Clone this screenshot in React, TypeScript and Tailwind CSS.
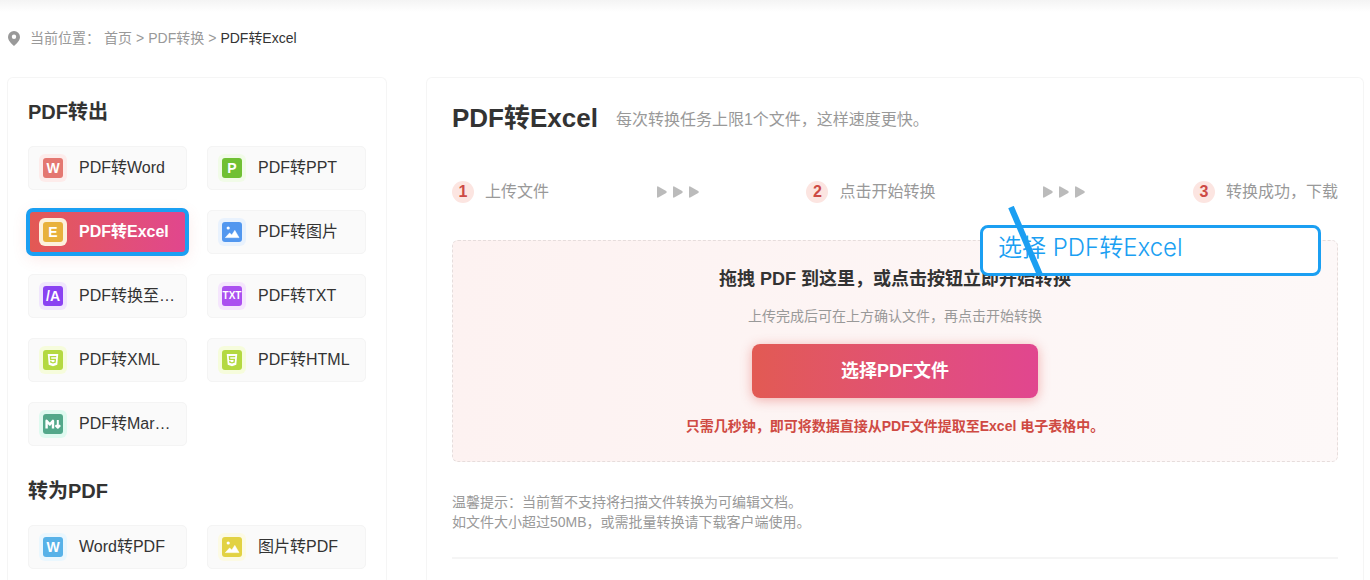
import type { ReactNode } from "react";
import { FaHtml5 } from "react-icons/fa";

interface Tool {
  label: string;
  icon: ReactNode;
  tile: string;
  halo: string;
  active?: boolean;
}

const Letter = ({ children }: { children: string }) => (
  <span className="text-sm leading-5 font-bold">{children}</span>
);

const PictureIcon = () => (
  <svg viewBox="0 0 20 20" className="size-5" fill="currentColor">
    <circle cx="6.2" cy="6" r="1.6" />
    <path d="M3.4 15.6 7.6 11l2.2 2 3-4.6 4.2 7.2z" stroke="currentColor" strokeWidth="0.6" strokeLinejoin="round" />
  </svg>
);

const MarkdownIcon = () => (
  <svg viewBox="0 0 20 20" className="size-5" fill="none" stroke="currentColor" strokeWidth="2.4" strokeLinejoin="round">
    <path d="M3.6 14.4V6.8L6.8 10.6 10 6.8V14.4" />
    <path d="M14.8 6V12M12.4 11.2 14.8 13.8 17.2 11.2" strokeWidth="2" />
  </svg>
);

const exportTools: Tool[] = [
  { label: "PDF转Word", icon: <Letter>W</Letter>, tile: "bg-[#e47771]", halo: "bg-[#fdeceb]" },
  { label: "PDF转PPT", icon: <Letter>P</Letter>, tile: "bg-[#70c034]", halo: "bg-[#f1fbe8]" },
  { label: "PDF转Excel", icon: <Letter>E</Letter>, tile: "bg-[#e8b13c]", halo: "bg-[#fdf1dc]", active: true },
  { label: "PDF转图片", icon: <PictureIcon />, tile: "bg-[#5297ef]", halo: "bg-[#e9f2fd]" },
  { label: "PDF转换至…", icon: <Letter>/A</Letter>, tile: "bg-[#8a42f2]", halo: "bg-[#f0e6fd]" },
  { label: "PDF转TXT", icon: <span className="text-[10px] leading-5 font-bold">TXT</span>, tile: "bg-[#ab50f0]", halo: "bg-[#f5e6fd]" },
  { label: "PDF转XML", icon: <FaHtml5 className="size-3.5" />, tile: "bg-[#b4d941]", halo: "bg-[#f6fcdc]" },
  { label: "PDF转HTML", icon: <FaHtml5 className="size-3.5" />, tile: "bg-[#b4d941]", halo: "bg-[#f6fcdc]" },
  { label: "PDF转Mar…", icon: <MarkdownIcon />, tile: "bg-[#53a88a]", halo: "bg-[#dffaf0]" },
];

const importTools: Tool[] = [
  { label: "Word转PDF", icon: <Letter>W</Letter>, tile: "bg-[#58b2e8]", halo: "bg-[#eaf7fe]" },
  { label: "图片转PDF", icon: <PictureIcon />, tile: "bg-[#e2d243]", halo: "bg-[#fcfae4]" },
];

const ToolLink = ({ label, icon, tile, halo, active }: Tool) => (
  <a
    href="#"
    className={
      active
        ? "flex h-11 items-center gap-3 rounded-[5px] bg-linear-to-r from-[#e35952] to-[#e1468e] px-[11px] font-bold text-white shadow-[0_4px_16px_rgba(227,89,82,0.15)] outline-4 -outline-offset-2 outline-[#1b9ff2]"
        : "flex h-11 items-center gap-3 rounded-[5px] border border-[#f4f4f4] bg-[#fafafa] px-2.5 text-[#333]"
    }
  >
    <span className={`flex size-7 shrink-0 items-center justify-center rounded-md ${halo}`}>
      <span className={`flex size-5 items-center justify-center rounded-[3px] text-white ${tile}`}>
        {icon}
      </span>
    </span>
    <span className="whitespace-nowrap">{label}</span>
  </a>
);

const ToolGroup = ({ title, tools }: { title: string; tools: Tool[] }) => (
  <section>
    <h2 className="text-xl leading-7 font-bold text-[#333]">{title}</h2>
    <div className="mt-5 grid grid-cols-2 gap-5">
      {tools.map((tool) => (
        <ToolLink key={tool.label} {...tool} />
      ))}
    </div>
  </section>
);

const Step = ({ number, children }: { number: number; children: string }) => (
  <div className="flex items-center gap-[11px]">
    <span className="flex size-[22px] items-center justify-center rounded-full bg-[#fce5e1] font-bold text-[#cd4a45]">
      {number}
    </span>
    <span>{children}</span>
  </div>
);

const StepArrows = () => (
  <svg viewBox="0 0 42 12" className="h-3 w-[42px] text-[#bbb]" fill="currentColor">
    <path d="M0 1.2Q0 0 1.2.4L9.2 5Q10.4 6 9.2 7L1.2 11.6Q0 12 0 10.8z" />
    <path d="M16 1.2Q16 0 17.2.4L25.2 5Q26.4 6 25.2 7L17.2 11.6Q16 12 16 10.8z" />
    <path d="M32 1.2Q32 0 33.2.4L41.2 5Q42.4 6 41.2 7L33.2 11.6Q32 12 32 10.8z" />
  </svg>
);

// Annotation that floats over the top right corner of the drop area
const Callout = () => (
  <div className="absolute -top-4 right-4 h-[51px] w-[341px] rounded-lg border-3 border-[#1b9ff2] bg-white px-[15px] text-left font-['Inter','Noto_Sans_CJK_SC',sans-serif] text-2xl leading-10 font-[350] text-[#1b9ff2]">
    选择 PDF转Excel
    <svg viewBox="0 0 36 70" className="absolute bottom-[-3px] left-6 h-[70px] w-9" stroke="#1b9ff2" strokeWidth="6">
      <path d="M4 1 33 69" />
    </svg>
  </div>
);

export default function App() {
  return (
    <div className="flex min-h-screen flex-col bg-white font-['Liberation_Sans','Noto_Sans_CJK_SC',sans-serif] text-base">
      <div className="h-3 bg-linear-to-b from-[#f4f4f4] to-white" />

      <nav className="mt-4 flex h-5 items-center pl-2 text-sm text-[#999]">
        <svg viewBox="0 0 12 15" className="mr-2.5 h-[15px] w-3" fill="#999">
          <path fillRule="evenodd" d="M6 0a6 6 0 0 1 6 6c0 3.6-3.2 6.4-6 9C3.2 12.4 0 9.6 0 6a6 6 0 0 1 6-6zm0 3.5a2.2 2.2 0 1 0 0 4.4 2.2 2.2 0 0 0 0-4.4z" />
        </svg>
        <span className="mr-1">当前位置：</span>
        <a href="#">首页</a>
        <span className="mx-1">&gt;</span>
        <a href="#">PDF转换</a>
        <span className="mx-1">&gt;</span>
        <a href="#" className="text-[#333]">PDF转Excel</a>
      </nav>

      <div className="mt-[29px] flex flex-1 gap-[39px] pr-1.5 pl-[7px]">
        <aside className="flex w-[380px] shrink-0 flex-col gap-[31px] rounded-t-md border border-b-0 border-[#f5f5f5] p-5 pb-0">
          <ToolGroup title="PDF转出" tools={exportTools} />
          <ToolGroup title="转为PDF" tools={importTools} />
        </aside>

        <main className="min-w-0 flex-1 rounded-t-md border border-b-0 border-[#f5f5f5] px-[25px] pt-6">
          <header className="flex items-end gap-[18px]">
            <h1 className="text-[26px] leading-8 font-bold text-[#333]">PDF转Excel</h1>
            <p className="leading-7 text-[#999]">每次转换任务上限1个文件，这样速度更快。</p>
          </header>

          <div className="mt-[46px] flex items-center justify-between text-[#999]">
            <Step number={1}>上传文件</Step>
            <StepArrows />
            <Step number={2}>点击开始转换</Step>
            <StepArrows />
            <Step number={3}>转换成功，下载</Step>
          </div>

          <div className="relative mt-9 flex flex-col items-center rounded-md border border-dashed border-[#e6dddc] bg-linear-to-r from-[#fdf2f1] to-[#fdf8f8] pt-6 pb-[25px] text-center">
            <h3 className="text-lg leading-7 font-bold text-[#333]">拖拽 PDF 到这里，或点击按钮立即开始转换</h3>
            <p className="mt-[13px] text-sm leading-5 text-[#999]">上传完成后可在上方确认文件，再点击开始转换</p>
            <button
              type="button"
              className="mt-[18px] h-[54px] w-[286px] rounded-lg bg-linear-to-r from-[#e25a53] to-[#e1468f] text-lg font-bold text-white shadow-[0_2px_12px_rgba(227,89,82,0.45)]"
            >
              选择PDF文件
            </button>
            <p className="mt-[18px] text-sm leading-5 font-bold text-[#cf4a43]">
              只需几秒钟，即可将数据直接从PDF文件提取至Excel 电子表格中。
            </p>
            <Callout />
          </div>

          <div className="mt-[30px] border-b-2 border-[#f5f5f5] pb-[25px] text-sm leading-5 text-[#999]">
            <p>温馨提示：当前暂不支持将扫描文件转换为可编辑文档。</p>
            <p>如文件大小超过50MB，或需批量转换请下载客户端使用。</p>
          </div>
        </main>
      </div>
    </div>
  );
}
